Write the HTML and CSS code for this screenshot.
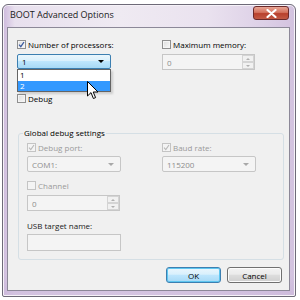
FILE: index.html
```html
<!DOCTYPE html>
<html>
<head>
<meta charset="utf-8">
<link rel="stylesheet" href="styles.css">
</head>
<body>
<div class="window">
  <div class="titlebar">
    <span class="title">BOOT Advanced Options</span>
    <span class="close"><svg width="11" height="9" viewBox="0 0 11 9"><path d="M1.5 1 L9.5 8 M9.5 1 L1.5 8" stroke="#fff" stroke-width="2.2" stroke-linecap="round"/></svg></span>
  </div>
  <div class="client">
    <div class="top">
      <div class="col">
        <label class="chk"><span class="box on"><svg width="7" height="7" viewBox="0 0 7 7"><path d="M1 3.6 L2.8 5.6 L6 1" fill="none" stroke="#3b5ba0" stroke-width="1.3"/></svg></span>Number of processors:</label>
        <div class="combo focus">
          <span>1</span><span class="arrow"></span>
          <div class="listbox">
            <div class="opt">1</div>
            <div class="opt sel">2</div>
          </div>
        </div>
        <label class="chk debug"><span class="box"></span>Debug</label>
      </div>
      <div class="col">
        <label class="chk"><span class="box"></span>Maximum memory:</label>
        <div class="spin dis"><span>0</span><span class="spinbtns"><span class="sb"><i class="up"></i></span><span class="sb"><i class="down"></i></span></span></div>
      </div>
    </div>
    <div class="group">
      <span class="legend">Global debug settings</span>
      <div class="ggrid">
        <div class="col">
          <label class="chk dis"><span class="box on dis"><svg width="7" height="7" viewBox="0 0 7 7"><path d="M1 3.6 L2.8 5.6 L6 1" fill="none" stroke="#b8b8b8" stroke-width="1.1"/></svg></span>Debug port:</label>
          <div class="combo dis"><span>COM1:</span><span class="arrow"></span></div>
          <label class="chk dis channel"><span class="box dis"></span>Channel</label>
          <div class="spin dis"><span>0</span><span class="spinbtns"><span class="sb"><i class="up"></i></span><span class="sb"><i class="down"></i></span></span></div>
          <div class="lbl">USB target name:</div>
          <div class="text dis"></div>
        </div>
        <div class="col">
          <label class="chk dis"><span class="box on dis"><svg width="7" height="7" viewBox="0 0 7 7"><path d="M1 3.6 L2.8 5.6 L6 1" fill="none" stroke="#b8b8b8" stroke-width="1.1"/></svg></span>Baud rate:</label>
          <div class="combo dis"><span>115200</span><span class="arrow"></span></div>
        </div>
      </div>
    </div>
    <div class="buttons">
      <span class="btn def">OK</span>
      <span class="btn">Cancel</span>
    </div>
    <svg class="cursor" width="12" height="19" viewBox="0 0 12 19"><path d="M0.5 0.5 L0.5 15 L4 11.6 L6.4 17.5 L8.6 16.6 L6.2 11 L11 11 Z" fill="#fff" stroke="#000" stroke-width="1" stroke-linejoin="round"/></svg>
  </div>
</div>
</body>
</html>
```

FILE: styles.css
```css
* { box-sizing: border-box; }
body {
  margin: 0;
  background: #fff;
  font-family: "Open Sans", "Noto Sans", sans-serif;
  font-size: 8px;
  color: #000;
}
.window {
  margin: 4px 0 0 2px;
  width: 294px;
  height: 293px;
  border: 1px solid #6e6a78;
  border-radius: 6px 6px 2px 2px;
  background:
    linear-gradient(to bottom, rgba(255,255,255,0) 0, rgba(255,255,255,0) 270px, rgba(205,186,220,0.8) 286px),
    linear-gradient(to right, #cdb9dc 0%, #e8e0ee 4%, #efeaf2 40%, #eae2ef 70%, #dccfe6 90%, #d3c2df 100%);
  padding: 0 5px 5px 4px;
  display: flex;
  flex-direction: column;
  box-shadow: inset 0 0 0 1px #f6f2f8;
}
.titlebar {
  height: 22px;
  display: flex;
  align-items: flex-start;
  justify-content: space-between;
  padding-left: 3px;
}
.title {
  font-size: 9px;
  color: #1a1a1a;
  margin-top: 3px;
}
.close {
  width: 36px;
  height: 14px;
  margin-top: 1px;
  margin-right: 1px;
  border: 1px solid #6b2a2a;
  border-radius: 3px;
  background: linear-gradient(#e8a595 0%, #d4735e 45%, #b8402c 55%, #c25a45 100%);
  display: flex;
  align-items: center;
  justify-content: center;
}
.client {
  flex: 1;
  background: #f0f0f0;
  border: 1px solid #8c8898;
  position: relative;
  padding: 11px 0 0 9px;
}
.top {
  display: grid;
  grid-template-columns: 145px 93px;
}
.col { display: flex; flex-direction: column; }
.chk {
  display: flex;
  align-items: center;
  height: 10px;
  gap: 2px;
  white-space: nowrap;
}
.chk.dis { color: #9a9a9a; }
.box {
  width: 9px;
  height: 9px;
  border: 1px solid #8f8f8f;
  background: linear-gradient(135deg, #dcdcdc, #f8f8f8);
  box-shadow: inset 0 0 0 1px #f4f4f4;
  display: flex;
  align-items: center;
  justify-content: center;
}
.box.dis { border-color: #c4c4c4; background: #f4f4f4; }
.combo {
  margin-top: 5px;
  width: 94px;
  height: 15px;
  border: 1px solid #8e8f8f;
  border-radius: 2px;
  display: flex;
  align-items: center;
  justify-content: space-between;
  padding: 0 6px 0 4px;
  position: relative;
}
.combo.focus {
  border-color: #3c7fb1;
  background: linear-gradient(#eaf6fd 0%, #d9f0fc 45%, #bee6fd 50%, #a7d9f5 100%);
}
.combo.dis {
  border-color: #c6c6c6;
  background: #f4f4f4;
  color: #8d8d8d;
  height: 16px;
  margin-top: 4px;
}
.arrow {
  width: 0; height: 0;
  border-left: 3px solid transparent;
  border-right: 3px solid transparent;
  border-top: 3px solid #000;
}
.combo.dis .arrow { border-top-color: #a8a8a8; }
.listbox {
  position: absolute;
  left: -1px;
  top: 14px;
  width: 94px;
  height: 23px;
  background: #fff;
  border: 1px solid #646464;
  z-index: 3;
  box-shadow: 2px 2px 2px rgba(0,0,0,0.15);
}
.opt {
  height: 10.5px;
  line-height: 10px;
  padding-left: 2px;
}
.opt.sel { background: #3399ff; color: #fff; }
.debug { margin-top: 24px; }
.spin {
  margin-top: 5px;
  width: 93px;
  height: 16px;
  border: 1px solid #c6c6c6;
  background: #f4f4f4;
  color: #8d8d8d;
  display: flex;
  align-items: center;
  justify-content: space-between;
  padding-left: 4px;
}
.spinbtns {
  display: flex;
  flex-direction: column;
  width: 12px;
  height: 14px;
}
.sb {
  flex: 1;
  border: 1px solid #d4d4d4;
  background: #f1f1f1;
  display: flex;
  align-items: center;
  justify-content: center;
}
.sb i { width: 0; height: 0; border-left: 2px solid transparent; border-right: 2px solid transparent; }
.sb i.up { border-bottom: 2px solid #b0b0b0; }
.sb i.down { border-top: 2px solid #b0b0b0; }
.group {
  margin: 30px 0 0 1px;
  width: 266px;
  height: 127px;
  border: 1px solid #d5dfe5;
  border-radius: 3px;
  position: relative;
  padding: 8px 0 0 8px;
}
.legend {
  position: absolute;
  top: -6px;
  left: 4px;
  background: #f0f0f0;
  padding: 0 1px;
  font-size: 8px;
  line-height: 10px;
}
.ggrid {
  display: grid;
  grid-template-columns: 135px 94px;
}
.channel { margin-top: 8px; }
.lbl { margin-top: 9px; color: #1a1a1a; }
.text {
  margin-top: 3px;
  width: 94px;
  height: 17px;
  border: 1px solid #c6c6c6;
  background: #f4f4f4;
}
.buttons {
  display: flex;
  gap: 6px;
  margin: 7px 0 0 149px;
}
.btn {
  width: 55px;
  height: 16px;
  border: 1px solid #707070;
  border-radius: 3px;
  background: linear-gradient(#f2f2f2 0%, #ebebeb 45%, #dddddd 50%, #cfcfcf 100%);
  box-shadow: inset 0 0 0 1px #fcfcfc;
  display: flex;
  align-items: center;
  justify-content: center;
}
.btn.def {
  border-color: #3c7fb1;
  background: linear-gradient(#eaf6fd 0%, #d9f0fc 45%, #bee6fd 50%, #a7d9f5 100%);
  box-shadow: inset 0 0 0 1px #5ec6f0;
}
.cursor {
  position: absolute;
  left: 79px;
  top: 53px;
  z-index: 5;
}
```
